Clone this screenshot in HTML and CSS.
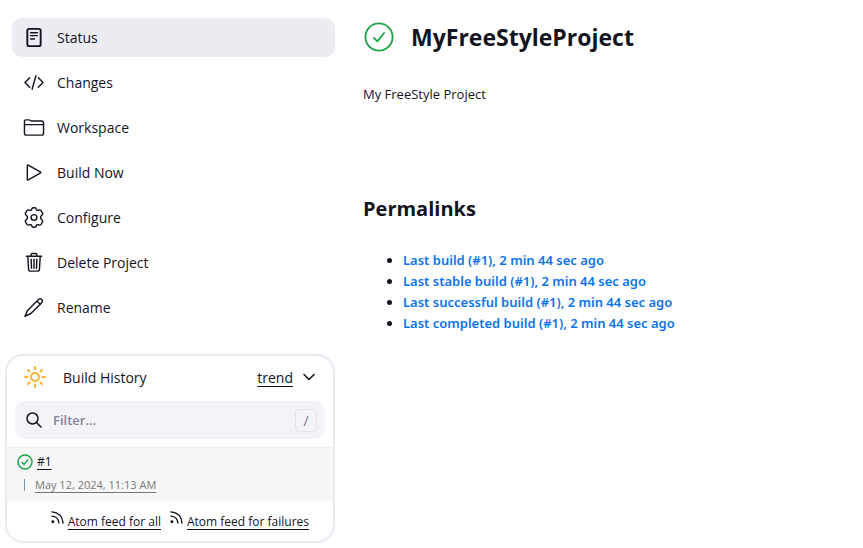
FILE: index.html
```html
<!DOCTYPE html>
<html lang="en">
<head>
<meta charset="utf-8">
<title>MyFreeStyleProject</title>
<link rel="stylesheet" href="styles.css">
</head>
<body>
<div class="page">
  <aside class="sidebar">
    <nav class="tasks" aria-label="Project">
      <a class="task task-active" href="#status">
        <svg class="icon" viewBox="0 0 22 22"><rect x="4" y="2" width="14" height="18" rx="2" stroke-width="2"/><path d="M7.500 6h7M7.500 9h7M7.500 12.500h4"/></svg>
        <span>Status</span>
      </a>
      <a class="task" href="#changes">
        <svg class="icon" viewBox="0 0 22 22"><path d="M6.500 6 1.500 11l5 5M15.500 6l5 5-5 5M13 4 9 18"/></svg>
        <span>Changes</span>
      </a>
      <a class="task" href="#workspace">
        <svg class="icon" viewBox="0 0 22 22"><path d="M1 17V4.500A1.500 1.500 0 0 1 2.500 3H6c1 0 1.500 1.200 2.500 1.200h10.500A2 2 0 0 1 21 6v11a2 2 0 0 1-2 2H3a2 2 0 0 1-2-2zM1 8h20"/></svg>
        <span>Workspace</span>
      </a>
      <a class="task" href="#build">
        <svg class="icon" viewBox="0 0 22 22"><path d="M4 4v14q0 1.200 1 .6l12.500-6.900q1.100-.7 0-1.400L5 3.400Q4 2.800 4 4z"/></svg>
        <span>Build Now</span>
      </a>
      <a class="task" href="#configure">
        <svg class="icon" viewBox="1 1 22 22"><circle cx="12" cy="12" r="3"/><path d="M9.600 3.400Q10 1.800 11 1.800h2q1 0 1.400 1.600.5 1.600 2.200 1l.9-.3q1.200-.3 1.900.7l1.500 2.500q.7 1-.3 1.900-1.800 1.300-1.800 2.800t1.800 2.800q1 .9.300 1.900l-1.500 2.500q-.7 1-1.900.7l-.9-.3q-1.700-.6-2.200 1-.4 1.600-1.400 1.600h-2q-1 0-1.400-1.600-.5-1.600-2.200-1l-.9.3q-1.200.3-1.900-.7l-1.500-2.500q-.7-1 .3-1.900 1.800-1.300 1.800-2.800T3.400 9.200q-1-.9-.3-1.900l1.500-2.500q.7-1 1.900-.7l.9.300q1.700.6 2.200-1z"/></svg>
        <span>Configure</span>
      </a>
      <a class="task" href="#delete">
        <svg class="icon" viewBox="0 0 22 22"><path d="m4.500 5 .8 13q.1 2 2 2h7.400q1.900 0 2-2l.8-13M3 4.500h16M8 4V2.500Q8 1.500 9 1.500h4q1 0 1 1V4M8 7.500l.4 9.500M11 7.500V17M14 7.500l-.4 9.500"/></svg>
        <span>Delete Project</span>
      </a>
      <a class="task" href="#rename">
        <svg class="icon" viewBox="0 0 22 22"><path d="M15.500 2.800q1.800-1.600 3.300-.4 1.900 1.700.2 3.700L7.800 17.300 1.500 20.300l2.700-6.200zM14 4.300l3.700 3.600"/></svg>
        <span>Rename</span>
      </a>
    </nav>

    <section class="history">
      <header class="history-head">
        <svg class="sun" viewBox="0 0 24 24"><circle cx="12" cy="12" r="4"/><path d="M12 2v2.500M12 19.500V22M2 12h2.500M19.500 12H22M5 5l1.600 1.600M17.400 17.400 19 19M5 19l1.600-1.600M17.400 6.600 19 5"/></svg>
        <span class="history-title">Build History</span>
        <a class="trend" href="#trend">trend</a>
        <button class="toggle" type="button" aria-label="Collapse"><svg viewBox="0 0 12 12"><path d="m1 3.500 5 5 5-5"/></svg></button>
      </header>
      <label class="filter">
        <svg class="search" viewBox="0 0 16 16"><circle cx="6.500" cy="6.500" r="5.500"/><path d="m10.500 10.500 4.500 4.500"/></svg>
        <input type="text" placeholder="Filter..." aria-label="Filter builds">
        <kbd>/</kbd>
      </label>
      <div class="build">
        <div class="build-name">
          <svg class="ok" viewBox="0 0 32 32"><circle cx="16" cy="16" r="14"/><path d="m10.500 17 3.700 3.700 7.300-9"/></svg>
          <a href="#1">#1</a>
        </div>
        <div class="build-date"><a href="#1">May 12, 2024, 11:13 AM</a></div>
      </div>
      <footer class="feeds">
        <a href="#all"><svg viewBox="0 0 14 14"><circle cx="2" cy="11.500" r="1.600"/><path d="M1 1q11 1 12 12M1 5.500q7 .5 7.500 7.500"/></svg><span>Atom feed for all</span></a>
        <a href="#failures"><svg viewBox="0 0 14 14"><circle cx="2" cy="11.500" r="1.600"/><path d="M1 1q11 1 12 12M1 5.500q7 .5 7.500 7.500"/></svg><span>Atom feed for failures</span></a>
      </footer>
    </section>
  </aside>

  <main class="main">
    <header class="headline">
      <svg class="ok ok-large" viewBox="0 0 32 32"><circle cx="16" cy="16" r="14.500"/><path d="m10.500 17 3.700 3.700 7.300-9"/></svg>
      <h1>MyFreeStyleProject</h1>
    </header>
    <p class="description">My FreeStyle Project</p>
    <h2>Permalinks</h2>
    <ul class="permalinks">
      <li><a href="#1">Last build (#1), 2 min 44 sec ago</a></li>
      <li><a href="#1">Last stable build (#1), 2 min 44 sec ago</a></li>
      <li><a href="#1">Last successful build (#1), 2 min 44 sec ago</a></li>
      <li><a href="#1">Last completed build (#1), 2 min 44 sec ago</a></li>
    </ul>
  </main>
</div>
</body>
</html>
```
FILE: styles.css
```css
* {
  box-sizing: border-box;
}

body {
  margin: 0;
  background: #fff;
  color: #14141f;
  font: 14px/21px "Open Sans", "Noto Sans", sans-serif;
}

a {
  color: inherit;
}

svg {
  display: block;
  flex: none;
  fill: none;
  stroke: currentColor;
  stroke-width: 1.5;
  stroke-linecap: round;
  stroke-linejoin: round;
}

.page {
  display: grid;
  grid-template-columns: 330px minmax(0, 1fr);
  gap: 28px;
  padding: 18px 5px 5px;
}

.tasks {
  display: flex;
  flex-direction: column;
  gap: 6px;
  padding-left: 7px;
}

.task {
  display: flex;
  align-items: center;
  gap: 12px;
  padding: 9px 11px;
  border-radius: 10px;
  text-decoration: none;
}

.task-active {
  background: #ecedf3;
}

.icon {
  width: 22px;
  height: 21px;
}

.history {
  margin-top: 27px;
  border: 2px solid #eaeaf3;
  border-radius: 18px;
}

.history-head {
  display: flex;
  align-items: center;
  padding: 9px 18px 12px 16px;
}

.sun {
  width: 24px;
  height: 24px;
  color: #fbb62c;
  stroke-width: 2;
}

.history-title {
  flex: 1;
  margin-left: 16px;
}

.trend,
.build a,
.feeds span {
  text-underline-offset: 3px;
}

.toggle {
  margin-left: 10px;
  padding: 0;
  border: 0;
  background: none;
  color: inherit;
}

.toggle svg {
  width: 12px;
  height: 12px;
}

.filter {
  display: flex;
  align-items: center;
  gap: 11px;
  height: 38px;
  margin: 0 8px 8px;
  padding: 0 8px 0 11px;
  border-radius: 10px;
  background: #f3f3f8;
}

.search {
  width: 16px;
  height: 16px;
}

.filter input {
  flex: 1;
  min-width: 0;
  padding: 0;
  border: 0;
  outline: 0;
  background: none;
  color: inherit;
  font: inherit;
  font-size: 13px;
  font-weight: 600;
}

.filter input::placeholder {
  color: #83839c;
  opacity: 1;
}

kbd {
  width: 22px;
  border: 1px solid #e3e3ea;
  border-radius: 4px;
  color: #73738c;
  font: inherit;
  text-align: center;
}

.build {
  padding: 3px 10px 6px;
  border-top: 1px solid #f0f0f2;
  background: #f7f7f7;
  font-size: 11px;
}

.build-name {
  display: flex;
  align-items: center;
  gap: 4px;
  margin-bottom: 2px;
  font-size: 12px;
}

.ok {
  width: 16px;
  height: 16px;
  color: #1ea64b;
  stroke-width: 3;
}

.build-date {
  display: flex;
  align-items: center;
  gap: 10px;
  padding-left: 7px;
  color: #777;
}

.build-date::before {
  content: "";
  width: 1px;
  height: 12px;
  background: #7f95a3;
}

.feeds {
  display: flex;
  justify-content: flex-end;
  gap: 9px;
  padding: 10px 24px 9px;
  font-size: 12px;
}

.feeds a {
  display: flex;
  gap: 4px;
  text-decoration: none;
}

.feeds span {
  text-decoration: underline;
}

.feeds svg {
  width: 13px;
  height: 13px;
}

.feeds circle {
  fill: currentColor;
  stroke: none;
}

.headline {
  display: flex;
  align-items: center;
  gap: 16px;
  height: 38px;
}

.ok-large {
  width: 32px;
  height: 30px;
  stroke-width: 2;
}

h1 {
  margin: 0;
  font-size: 23px;
  font-weight: 700;
  line-height: 38px;
}

.description {
  margin: 28px 0 0;
  font-size: 13px;
}

h2 {
  margin: 89px 0 0;
  font-size: 20px;
  font-weight: 700;
  line-height: 30px;
}

.permalinks {
  margin: 26px 0 0;
  padding-left: 40px;
  font-family: "Noto Sans", "Open Sans", sans-serif;
  font-size: 13px;
}

.permalinks a {
  color: #0b74ea;
  font-weight: 600;
  text-decoration: none;
}
```
